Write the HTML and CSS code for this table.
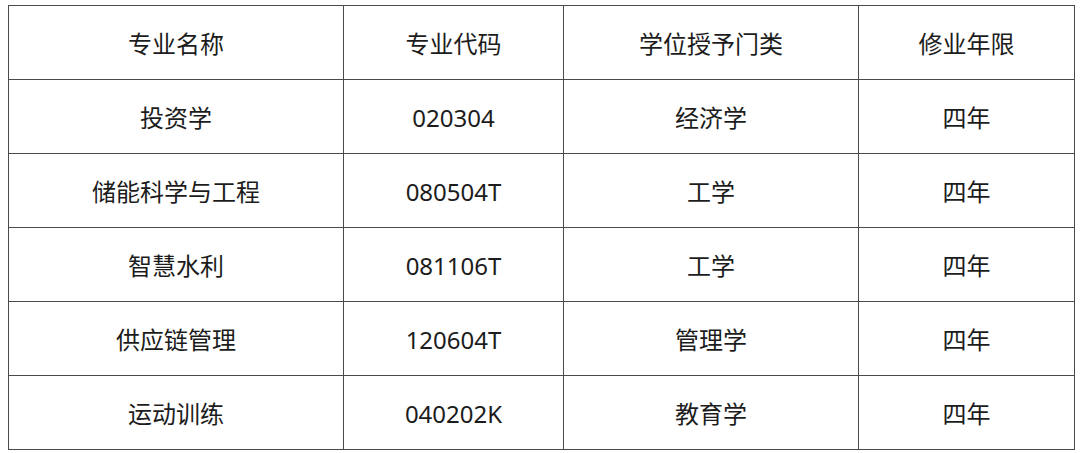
FILE: index.html
```html
<!DOCTYPE html>
<html lang="zh-CN">
<head>
<meta charset="utf-8">
<link rel="stylesheet" href="styles.css">
</head>
<body>
<div class="wrap">
<table class="majors">
<colgroup>
<col class="c1"><col class="c2"><col class="c3"><col class="c4">
</colgroup>
<tr><td>专业名称</td><td>专业代码</td><td>学位授予门类</td><td>修业年限</td></tr>
<tr><td>投资学</td><td>020304</td><td>经济学</td><td>四年</td></tr>
<tr><td>储能科学与工程</td><td>080504T</td><td>工学</td><td>四年</td></tr>
<tr><td>智慧水利</td><td>081106T</td><td>工学</td><td>四年</td></tr>
<tr><td>供应链管理</td><td>120604T</td><td>管理学</td><td>四年</td></tr>
<tr><td>运动训练</td><td>040202K</td><td>教育学</td><td>四年</td></tr>
</table>
</div>
</body>
</html>
```
FILE: styles.css
```css
html, body {
  margin: 0;
  padding: 0;
  background: #ffffff;
}
.wrap {
  padding: 5px 0 0 8px;
}
.majors {
  border-collapse: collapse;
  table-layout: fixed;
  width: 1066px;
  font-family: "Noto Sans", "Noto Sans CJK SC", sans-serif;
  font-size: 24px;
  color: #1c1c1c;
}
.c1 { width: 335px; }
.c2 { width: 220px; }
.c3 { width: 295px; }
.c4 { width: 216px; }
.majors td {
  border: 1px solid #4a4a4a;
  height: 74px;
  padding: 4px 0 0 0;
  box-sizing: border-box;
  text-align: center;
  vertical-align: middle;
  line-height: 1.2;
}
```
